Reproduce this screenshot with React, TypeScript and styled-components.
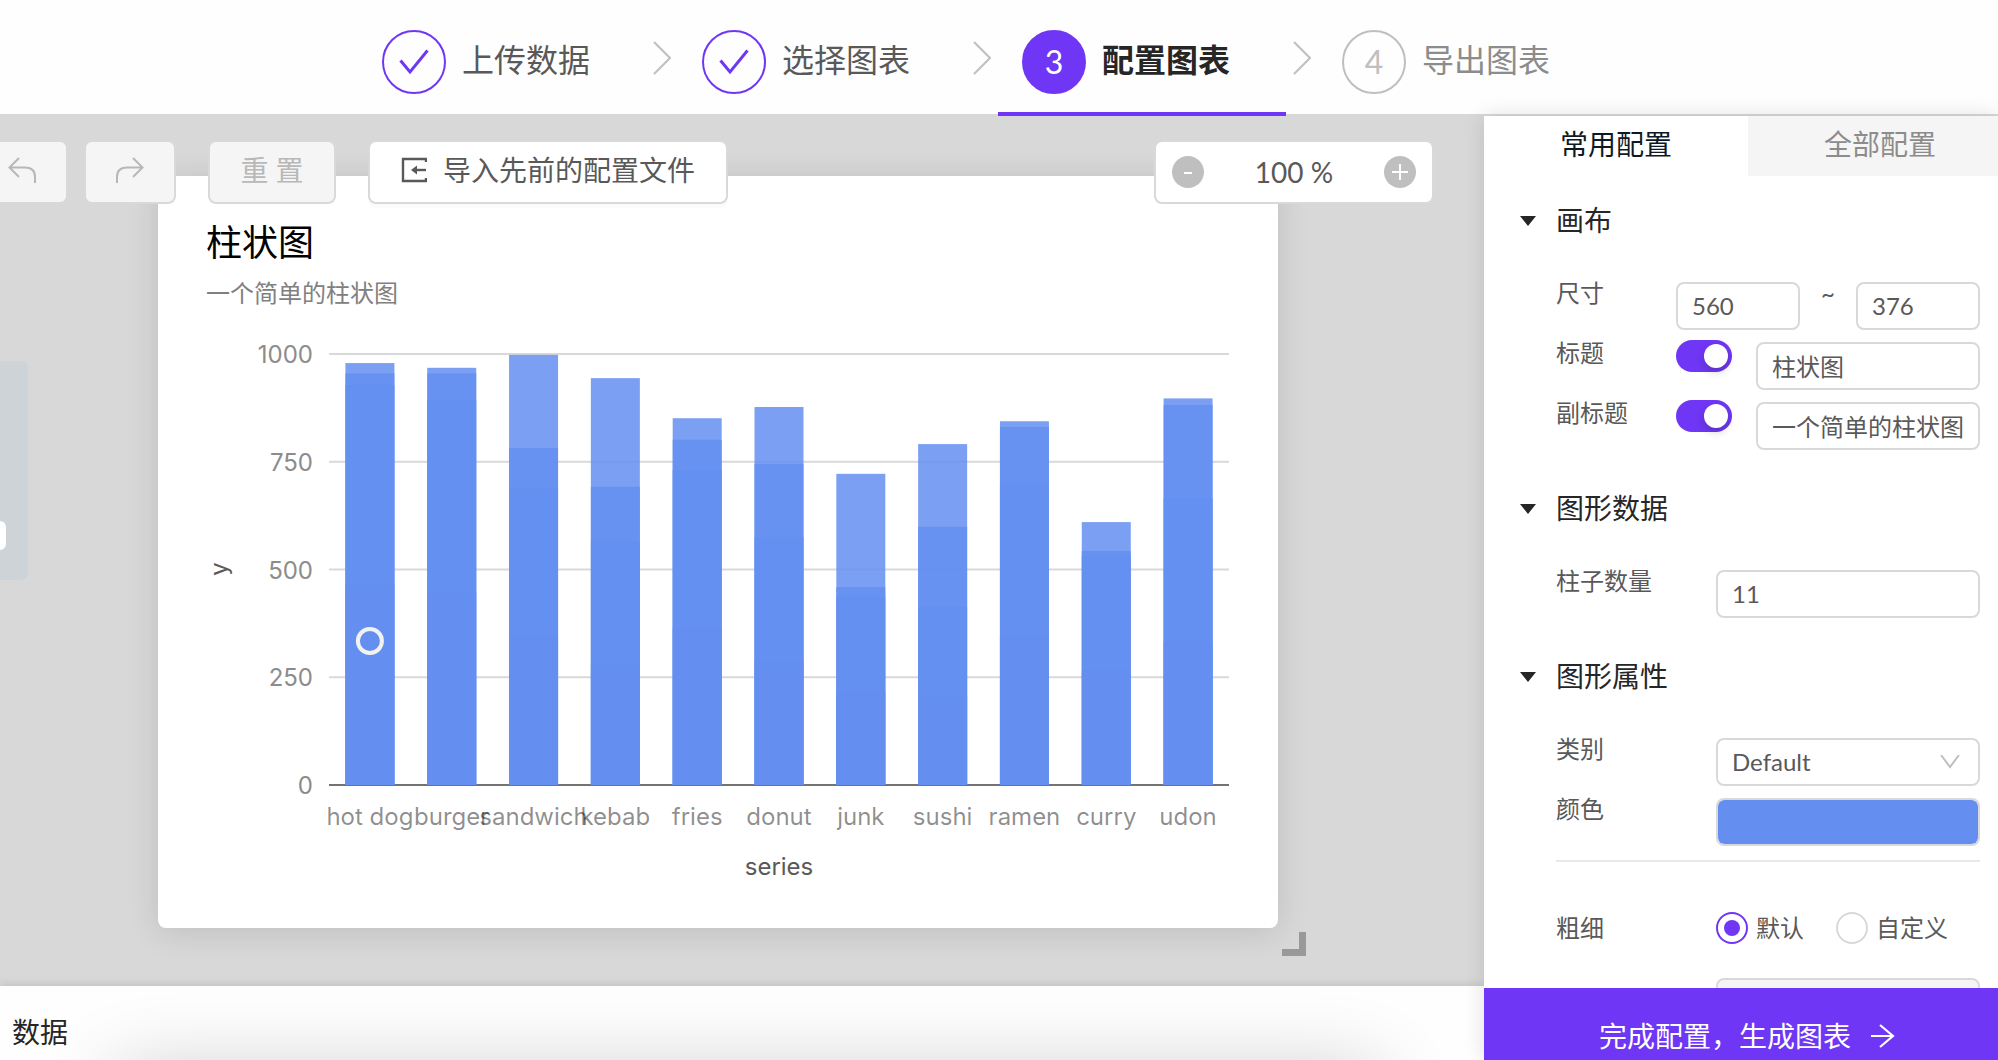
import React, { useId } from "react";
import styled, { createGlobalStyle } from "styled-components";

const purple = "#6f36f5";
const line = "#d9d9d9";
const sans = `Lato, "Noto Sans CJK SC", sans-serif`;

const GlobalStyle = createGlobalStyle`
  * { box-sizing: border-box; }
  body { margin: 0; background: #fff; font-family: ${sans}; font-size: 24px; color: #595959; }
  button, input, select { font: inherit; color: inherit; }
`;

const Page = styled.div`
  display: flex;
  flex-direction: column;
  height: 100vh;
  overflow: hidden;
`;

const Header = styled.header`
  flex: none;
  height: 114px;
  background: #fefefe;
`;

const Steps = styled.ol`
  display: flex;
  justify-content: center;
  height: 116px;
  margin: 0;
  padding: 0 34px 0 0;
  list-style: none;
`;

const Step = styled.li<{ $active?: boolean }>`
  position: relative;
  z-index: 2;
  flex: none;
  display: flex;
  align-items: center;
  gap: 16px;
  width: 288px;
  padding: 16px 24px 4px;
  border-bottom: 4px solid ${(p) => (p.$active ? purple : "transparent")};
`;

const StepMark = styled.span<{ $state: "done" | "active" | "next" }>`
  flex: none;
  display: flex;
  align-items: center;
  justify-content: center;
  width: 64px;
  height: 64px;
  border: 2px solid ${(p) => (p.$state === "next" ? "#bfbfbf" : purple)};
  border-radius: 50%;
  background: ${(p) => (p.$state === "active" ? purple : "transparent")};
  color: ${(p) => (p.$state === "active" ? "#fff" : p.$state === "next" ? "#bfbfbf" : purple)};
  font-size: 32px;
  line-height: 40px;
`;

const StepText = styled.span<{ $state: "done" | "active" | "next" }>`
  padding-bottom: 4px;
  color: ${(p) => (p.$state === "active" ? "#262626" : p.$state === "next" ? "#8c8c8c" : "#595959")};
  font-size: 32px;
  line-height: 40px;
  font-weight: ${(p) => (p.$state === "active" ? 700 : 400)};
  white-space: nowrap;
`;

const StepGap = styled.li`
  flex: none;
  display: flex;
  align-items: center;
  justify-content: center;
  width: 32px;
`;

const Body = styled.div`
  flex: 1;
  min-height: 0;
  display: flex;
  background: #d8d8d8;
`;

const Main = styled.main`
  flex: 1;
  min-width: 0;
  display: flex;
  flex-direction: column;
`;

const Stage = styled.section`
  position: relative;
  flex: 1;
  min-height: 0;
  padding: 62px 0 0 158px;
  overflow: hidden;
`;

const Toolbar = styled.div`
  position: absolute;
  inset: 26px 50px auto -24px;
  display: flex;
  gap: 16px;
`;

const ToolButton = styled.button<{ $width: number; $spaced?: boolean }>`
  display: flex;
  align-items: center;
  justify-content: center;
  gap: 16px;
  width: ${(p) => p.$width}px;
  height: 64px;
  margin-left: ${(p) => (p.$spaced ? 16 : 0)}px;
  padding: 0 0 4px;
  border: 2px solid ${line};
  border-radius: 8px;
  background: #fff;
  box-shadow: 0 4px 0 rgba(0, 0, 0, 0.015);
  font-size: 28px;
  line-height: 40px;
  white-space: nowrap;
  &:disabled {
    background: #f5f5f5;
    color: #b8b8b8;
    box-shadow: none;
  }
`;

const ZoomBox = styled.div`
  display: flex;
  align-items: center;
  justify-content: space-between;
  width: 280px;
  height: 64px;
  margin-left: auto;
  padding: 0 16px;
  border: 2px solid ${line};
  border-radius: 8px;
  background: #fff;
  font-size: 28px;
  line-height: 40px;
`;

const RoundButton = styled.button`
  display: flex;
  align-items: center;
  justify-content: center;
  width: 32px;
  height: 32px;
  padding: 0;
  border: 0;
  border-radius: 50%;
  background: #bfbfbf;
`;

const Minimap = styled.div`
  position: absolute;
  left: 0;
  top: 247px;
  display: flex;
  align-items: flex-end;
  width: 28px;
  height: 219px;
  padding-bottom: 30px;
  border-radius: 0 6px 6px 0;
  background: #ced3d7;
`;

const MinimapThumb = styled.div`
  width: 6px;
  height: 29px;
  border-radius: 0 6px 6px 0;
  background: #fff;
`;

const Card = styled.article`
  position: relative;
  width: 1120px;
  height: 752px;
  padding-top: 42px;
  border-radius: 8px;
  background: #fff;
  box-shadow: 0 4px 32px rgba(0, 0, 0, 0.12);
`;

const CardTitle = styled.h2`
  margin: 0 48px;
  color: #000;
  font-size: 36px;
  line-height: 48px;
  font-weight: 400;
`;

const CardSubtitle = styled.p`
  margin: 10px 48px 0;
  color: #808080;
  font-size: 24px;
  line-height: 34px;
`;

const ChartSvg = styled.svg`
  display: block;
  width: 100%;
  font-family: Inter, sans-serif;
  font-size: 24px;
`;

const ResizeHandle = styled.div`
  position: absolute;
  right: -28px;
  bottom: -28px;
  width: 24px;
  height: 24px;
  border: solid #999;
  border-width: 0 7px 7px 0;
`;

const DataBar = styled.section`
  position: relative;
  flex: none;
  height: 74px;
  padding: 26px 12px 0;
  background: #fefefe;
  box-shadow: 0 -2px 8px rgba(0, 0, 0, 0.1);
  &::after {
    content: "";
    position: absolute;
    top: 84px;
    left: 116px;
    right: 106px;
    height: 100px;
    box-shadow: 0 0 80px rgba(0, 0, 0, 0.2);
  }
`;

const DataTitle = styled.h2`
  margin: 0;
  color: #262626;
  font-size: 28px;
  line-height: 40px;
  font-weight: 400;
`;

const Panel = styled.aside`
  position: relative;
  flex: none;
  display: flex;
  flex-direction: column;
  width: 514px;
  margin-top: 2px;
  background: #fff;
  box-shadow: 0 0 20px rgba(0, 0, 0, 0.12);
`;

const Tabs = styled.div`
  flex: none;
  display: flex;
  overflow: hidden;
`;

const Tab = styled.button<{ $active?: boolean }>`
  flex: none;
  width: 264px;
  height: 60px;
  padding: 0 0 4px;
  border: 0;
  background: ${(p) => (p.$active ? "#fff" : "#f5f5f5")};
  color: ${(p) => (p.$active ? "#0d1a26" : "#8c8c8c")};
  font-size: 28px;
  line-height: 40px;
`;

const Form = styled.form`
  flex: 1;
  min-height: 0;
  display: flex;
  flex-direction: column;
  gap: 30px;
  padding: 24px 18px 0 36px;
  overflow: hidden;
`;

const Section = styled.section`
  flex: none;
`;

const SectionTitle = styled.h3`
  display: flex;
  align-items: center;
  gap: 20px;
  margin: 0 0 38px;
  color: #262626;
  font-size: 28px;
  line-height: 40px;
  font-weight: 400;
  svg {
    margin-top: 2px;
  }
`;

const Row = styled.div<{ $wide?: boolean }>`
  display: grid;
  grid-template-columns: ${(p) => (p.$wide ? "160px 1fr" : "120px 1fr")};
  align-items: start;
  height: 60px;
  padding-left: 36px;
`;

const RadioRow = styled(Row)`
  align-items: center;
  margin-bottom: 16px;
`;

const Label = styled.label`
  font-size: 24px;
  line-height: 30px;
`;

const Fields = styled.div<{ $gap?: number }>`
  display: flex;
  justify-content: space-between;
  gap: ${(p) => p.$gap ?? 0}px;
`;

const Tilde = styled.span`
  line-height: 30px;
`;

const TextInput = styled.input`
  flex: 1;
  width: 100%;
  min-width: 0;
  height: 48px;
  margin: 4px 0 0;
  padding: 0 14px 2px;
  border: 2px solid ${line};
  border-radius: 8px;
  background: #fff;
  &:disabled {
    background: #f5f5f5;
  }
`;

const SizeInput = styled(TextInput)`
  flex: 0 0 124px;
`;

const ColorInput = styled(TextInput)`
  padding: 0;
  overflow: hidden;
  &::-webkit-color-swatch-wrapper {
    padding: 0;
  }
  &::-webkit-color-swatch {
    border: 0;
    border-radius: 6px;
  }
`;

const Switch = styled.input`
  appearance: none;
  flex: none;
  display: flex;
  align-items: center;
  width: 56px;
  height: 32px;
  margin: 2px 0 0;
  padding-left: 28px;
  border-radius: 16px;
  background: ${purple};
  &::after {
    content: "";
    width: 24px;
    height: 24px;
    border-radius: 50%;
    background: #fff;
    box-shadow: 0 4px 8px rgba(0, 35, 11, 0.2);
  }
`;

const SelectWrap = styled.div`
  position: relative;
  svg {
    position: absolute;
    right: 20px;
    top: 21px;
    pointer-events: none;
  }
`;

const Select = styled.select`
  appearance: none;
  width: 100%;
  height: 48px;
  margin-top: 4px;
  padding: 0 14px 2px;
  border: 2px solid ${line};
  border-radius: 8px;
  background: #fff;
`;

const Rule = styled.hr`
  height: 2px;
  margin: 6px 0 36px 36px;
  border: 0;
  background: #e8e8e8;
`;

const RadioGroup = styled.div`
  display: flex;
  gap: 32px;
`;

const RadioLabel = styled.label`
  display: flex;
  align-items: center;
  gap: 8px;
  line-height: 32px;
`;

const Radio = styled.input`
  appearance: none;
  display: flex;
  align-items: center;
  justify-content: center;
  width: 32px;
  height: 32px;
  margin: 0;
  border: 2px solid ${line};
  border-radius: 50%;
  &:checked {
    border-color: ${purple};
  }
  &:checked::after {
    content: "";
    width: 16px;
    height: 16px;
    border-radius: 50%;
    background: ${purple};
  }
`;

const Submit = styled.button`
  flex: none;
  display: flex;
  align-items: center;
  justify-content: center;
  gap: 20px;
  height: 72px;
  padding: 24px 0 0 12px;
  border: 0;
  background: ${purple};
  color: #fff;
  font-size: 28px;
  line-height: 40px;
`;

const CheckIcon = () => (
  <svg width="30" height="26" viewBox="0 0 30 26" fill="none" stroke="currentColor" strokeWidth="3">
    <path d="M1.500 11.500 11 23 28.500 1.500" />
  </svg>
);

const StepArrow = () => (
  <svg width="18" height="34" viewBox="0 0 18 34" fill="none" stroke="#bfbfbf" strokeWidth="2">
    <path d="M1 1 17 17 1 33" />
  </svg>
);

const TurnIcon = ({ flip }: { flip?: boolean }) => (
  <svg width="28" height="26" viewBox="0 0 28 26" fill="none" stroke="#b8b8b8" strokeWidth="2">
    <g transform={flip ? "matrix(-1 0 0 1 28 0)" : undefined}>
      <path d="M11 1 1.500 10.500 11 20M1.500 10.500H17Q27 10.500 27 20V26" />
    </g>
  </svg>
);

const ImportIcon = () => (
  <svg width="26" height="26" viewBox="0 0 26 26" fill="none" stroke="#595959" strokeWidth="2.400">
    <path d="M25 5V2H2V24H25V21" />
    <path d="M13 13H25" />
    <path d="M10 13 16 8.500V17.500Z" fill="#595959" stroke="none" />
  </svg>
);

const PlusMinus = ({ plus }: { plus?: boolean }) => (
  <svg width="16" height="16" viewBox="0 0 16 16" stroke="#fff" strokeWidth="2">
    {plus ? <path d="M0 8H16M8 0V16" /> : <path d="M4 9H12" />}
  </svg>
);

const Caret = () => (
  <svg width="16" height="10" viewBox="0 0 16 10" fill="#262626">
    <path d="M0 0H16L8 10Z" />
  </svg>
);

const ForwardIcon = () => (
  <svg width="24" height="24" viewBox="0 0 24 24" fill="none" stroke="currentColor" strokeWidth="2.200">
    <path d="M0 12H22M9 1 22 12 9 23" />
  </svg>
);

const steps = [
  { label: "上传数据", state: "done" },
  { label: "选择图表", state: "done" },
  { label: "配置图表", state: "active" },
  { label: "导出图表", state: "next" },
] as const;

/* Each category stacks translucent bars; values run from the tallest down. */
const series: { name: string; values: number[] }[] = [
  { name: "hot dog", values: [979, 955, 928] },
  { name: "burger", values: [968, 955, 893] },
  { name: "sandwich", values: [998, 782, 689] },
  { name: "kebab", values: [944, 692, 566] },
  { name: "fries", values: [851, 801, 731] },
  { name: "donut", values: [877, 745, 575] },
  { name: "junk", values: [722, 459, 436] },
  { name: "sushi", values: [791, 599, 413] },
  { name: "ramen", values: [844, 831, 696] },
  { name: "curry", values: [610, 543, 530] },
  { name: "udon", values: [897, 882, 664] },
];

const plot = { left: 171, right: 1071, top: 44, bottom: 475, bar: 49 };
const yOf = (v: number) => plot.bottom - (v / 1000) * (plot.bottom - plot.top);

function BarChart() {
  const band = (plot.right - plot.left) / series.length;
  const cx = (i: number) => plot.left + band * (i + 0.5);
  return (
    <ChartSvg viewBox="0 0 1120 618" role="img" aria-label="柱状图">
      {[1000, 750, 500, 250, 0].map((v) => (
        <g key={v}>
          <line
            x1={plot.left}
            x2={plot.right}
            y1={yOf(v)}
            y2={yOf(v)}
            stroke={v ? "#d9d9d9" : "#737373"}
            strokeWidth="2"
          />
          <text x="155" y={yOf(v) + 9} textAnchor="end" fill="#8c8c8c">
            {v}
          </text>
        </g>
      ))}
      {series.map((s, i) => (
        <g key={s.name}>
          {[...s.values, s.values[2] / 2].map((v, k) => (
            <rect
              key={k}
              x={cx(i) - plot.bar / 2}
              y={yOf(v)}
              width={plot.bar}
              height={plot.bottom - yOf(v)}
              fill="#648ff1"
              fillOpacity="0.85"
            />
          ))}
          <text x={cx(i)} y="515" textAnchor="middle" fill="#000" fillOpacity="0.45">
            {s.name}
          </text>
        </g>
      ))}
      <circle cx={cx(0)} cy="331" r="12" fill="none" stroke="#f2f2f2" strokeWidth="4" />
      <text x={(plot.left + plot.right) / 2} y="565" textAnchor="middle" fill="#595959">
        series
      </text>
      <text transform="translate(69 259) rotate(-90)" textAnchor="middle" fill="#595959">
        y
      </text>
    </ChartSvg>
  );
}

function ToggledText({ label, value }: { label: string; value: string }) {
  const id = useId();
  return (
    <Row>
      <Label htmlFor={id}>{label}</Label>
      <Fields $gap={24}>
        <Switch type="checkbox" role="switch" aria-label={label} defaultChecked />
        <TextInput id={id} defaultValue={value} />
      </Fields>
    </Row>
  );
}

export default function App() {
  return (
    <Page>
      <GlobalStyle />
      <Header>
        <Steps>
          {steps.map((s, i) => (
            <React.Fragment key={s.label}>
              {i > 0 && (
                <StepGap aria-hidden>
                  <StepArrow />
                </StepGap>
              )}
              <Step $active={s.state === "active"}>
                <StepMark $state={s.state}>{s.state === "done" ? <CheckIcon /> : i + 1}</StepMark>
                <StepText $state={s.state}>{s.label}</StepText>
              </Step>
            </React.Fragment>
          ))}
        </Steps>
      </Header>
      <Body>
        <Main>
          <Stage>
            <Minimap>
              <MinimapThumb />
            </Minimap>
            <Card>
              <CardTitle>柱状图</CardTitle>
              <CardSubtitle>一个简单的柱状图</CardSubtitle>
              <BarChart />
              <ResizeHandle />
            </Card>
            <Toolbar>
              <ToolButton $width={92} disabled aria-label="撤销">
                <TurnIcon />
              </ToolButton>
              <ToolButton $width={92} disabled aria-label="重做">
                <TurnIcon flip />
              </ToolButton>
              <ToolButton $width={128} $spaced disabled>
                重 置
              </ToolButton>
              <ToolButton $width={360} $spaced>
                <ImportIcon />
                导入先前的配置文件
              </ToolButton>
              <ZoomBox>
                <RoundButton aria-label="缩小">
                  <PlusMinus />
                </RoundButton>
                <span>100 %</span>
                <RoundButton aria-label="放大">
                  <PlusMinus plus />
                </RoundButton>
              </ZoomBox>
            </Toolbar>
          </Stage>
          <DataBar>
            <DataTitle>数据</DataTitle>
          </DataBar>
        </Main>
        <Panel>
          <Tabs>
            <Tab $active>常用配置</Tab>
            <Tab>全部配置</Tab>
          </Tabs>
          <Form>
            <Section>
              <SectionTitle>
                <Caret />
                画布
              </SectionTitle>
              <Row>
                <Label htmlFor="canvas-width">尺寸</Label>
                <Fields>
                  <SizeInput id="canvas-width" defaultValue="560" />
                  <Tilde>~</Tilde>
                  <SizeInput aria-label="高度" defaultValue="376" />
                </Fields>
              </Row>
              <ToggledText label="标题" value="柱状图" />
              <ToggledText label="副标题" value="一个简单的柱状图" />
            </Section>
            <Section>
              <SectionTitle>
                <Caret />
                图形数据
              </SectionTitle>
              <Row $wide>
                <Label htmlFor="bar-count">柱子数量</Label>
                <TextInput id="bar-count" defaultValue="11" />
              </Row>
            </Section>
            <Section>
              <SectionTitle>
                <Caret />
                图形属性
              </SectionTitle>
              <Row $wide>
                <Label htmlFor="kind">类别</Label>
                <SelectWrap>
                  <Select id="kind">
                    <option>Default</option>
                  </Select>
                  <svg width="20" height="14" viewBox="0 0 20 14" fill="none" stroke="#bfbfbf" strokeWidth="2">
                    <path d="M1 0 10 12 19 0" />
                  </svg>
                </SelectWrap>
              </Row>
              <Row $wide>
                <Label htmlFor="color">颜色</Label>
                <ColorInput id="color" type="color" defaultValue="#648ff1" />
              </Row>
              <Rule />
              <RadioRow $wide>
                <Label as="span">粗细</Label>
                <RadioGroup role="radiogroup" aria-label="粗细">
                  <RadioLabel>
                    <Radio type="radio" name="weight" defaultChecked />
                    默认
                  </RadioLabel>
                  <RadioLabel>
                    <Radio type="radio" name="weight" />
                    自定义
                  </RadioLabel>
                </RadioGroup>
              </RadioRow>
              <Row $wide>
                <span />
                <TextInput aria-label="粗细" disabled />
              </Row>
            </Section>
          </Form>
          <Submit type="button">
            完成配置，生成图表
            <ForwardIcon />
          </Submit>
        </Panel>
      </Body>
    </Page>
  );
}
